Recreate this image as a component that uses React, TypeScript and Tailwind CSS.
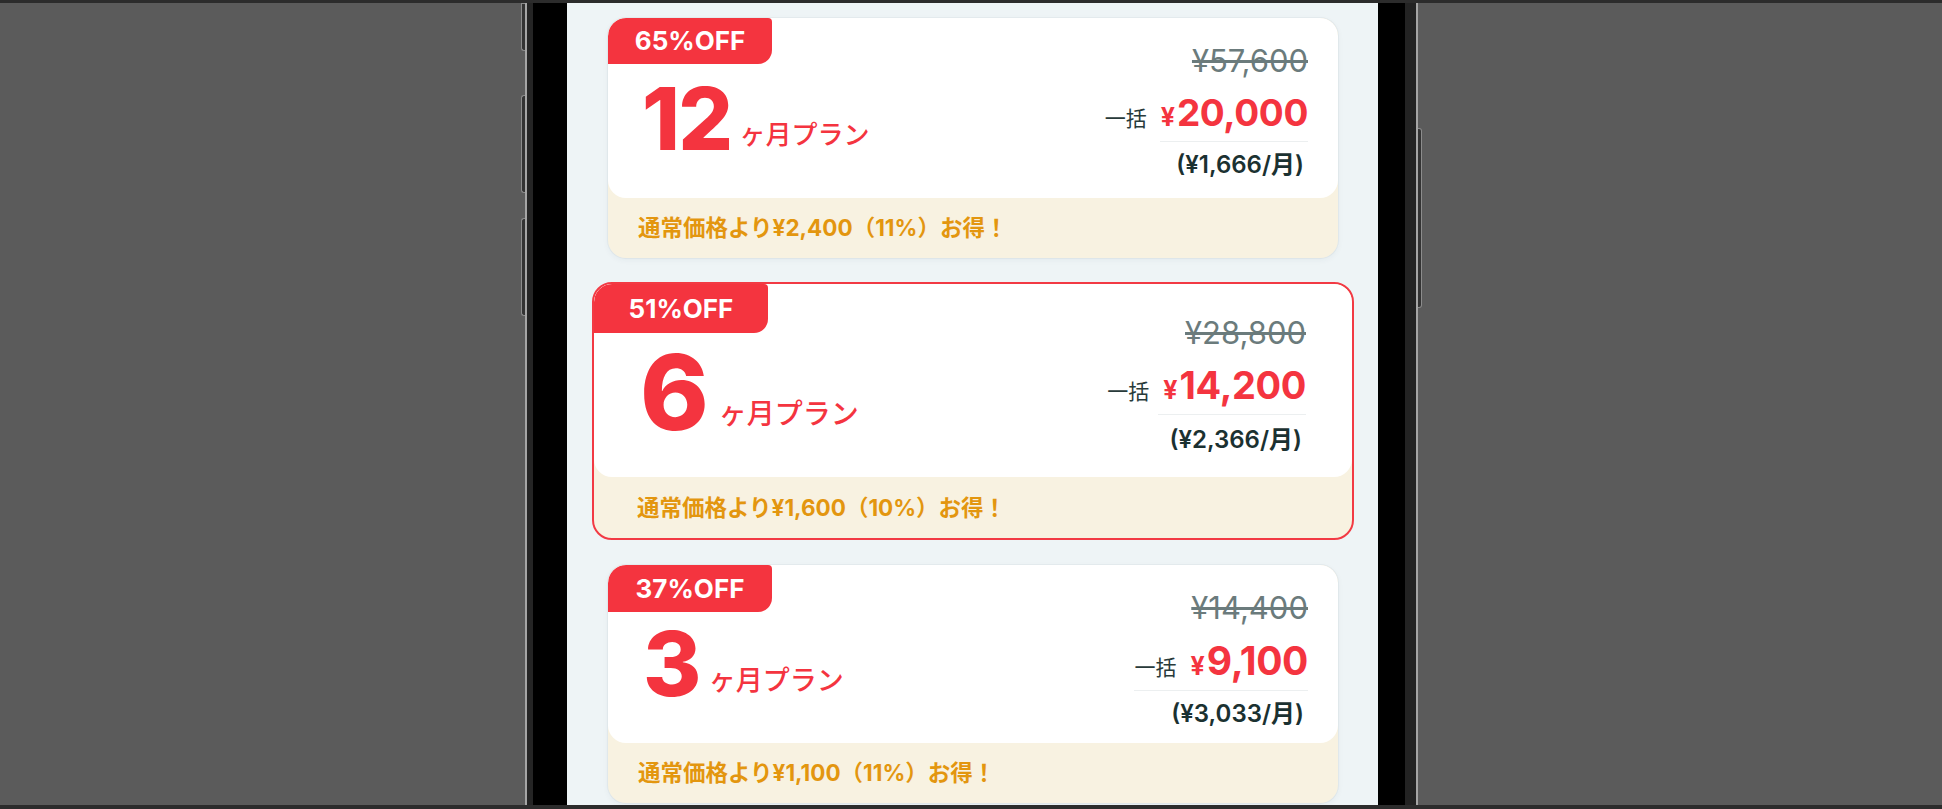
import type { ReactNode } from 'react';

interface Plan {
  badge: string;
  months: string;
  original: string;
  price: string;
  monthly: string;
  saving: string;
  selected?: boolean;
  /** クラスの差分(カードごとの寸法) */
  v: {
    panel: string;
    badge: string;
    numRow: string;
    num: string;
    unit: string;
    right: string;
    price: string;
    divider: string;
    monthly: string;
    foot: string;
  };
}

const plans: Plan[] = [
  {
    badge: '65%OFF',
    months: '12',
    original: '¥57,600',
    price: '20,000',
    monthly: '(¥1,666/月)',
    saving: '通常価格より¥2,400（11%）お得！',
    v: {
      panel: 'h-[180px]',
      badge: 'h-[46px] w-[164px]',
      numRow: 'mt-[12px] pl-[34px]',
      num: 'text-[86px]',
      unit: 'ml-[8px] text-[26px]',
      right: 'pt-[27px] pr-[30px]',
      price: 'text-[37px]',
      divider: 'w-[148px]',
      monthly: 'mt-[11px]',
      foot: 'h-[60px] pl-[30px]',
    },
  },
  {
    badge: '51%OFF',
    months: '6',
    original: '¥28,800',
    price: '14,200',
    monthly: '(¥2,366/月)',
    saving: '通常価格より¥1,600（10%）お得！',
    selected: true,
    v: {
      panel: 'h-[193px]',
      badge: 'h-[49px] w-[174px]',
      numRow: 'mt-[7px] pl-[46px]',
      num: 'text-[104px]',
      unit: 'ml-[12px] text-[28px]',
      right: 'pt-[33px] pr-[46px]',
      price: 'text-[38px]',
      divider: 'w-[148px]',
      monthly: 'mt-[13px]',
      foot: 'h-[61px] pl-[43px]',
    },
  },
  {
    badge: '37%OFF',
    months: '3',
    original: '¥14,400',
    price: '9,100',
    monthly: '(¥3,033/月)',
    saving: '通常価格より¥1,100（11%）お得！',
    v: {
      panel: 'h-[178px]',
      badge: 'h-[47px] w-[164px]',
      numRow: 'mt-[7px] pl-[35px]',
      num: 'text-[89px]',
      unit: 'ml-[9px] text-[27px]',
      right: 'pt-[27px] pr-[30px]',
      price: 'text-[39px]',
      divider: 'w-[174px]',
      monthly: 'mt-[11px]',
      foot: 'h-[60px] pl-[30px]',
    },
  },
];

function PlanCard({ plan, className }: { plan: Plan; className?: string }) {
  const { v } = plan;
  const frame = plan.selected
    ? 'mx-[-16px] rounded-[20px] border-2 border-[#f23a44]'
    : 'rounded-[18px] shadow-[0_0_0_1px_rgba(20,60,70,0.04),0_2px_6px_rgba(20,60,70,0.05)]';
  return (
    <div className={`overflow-hidden bg-[#f8f2e1] ${frame} ${className ?? ''}`}>
      <div className={`flex justify-between rounded-[18px] bg-white ${v.panel}`}>
        <div className="flex flex-col">
          <div
            className={`flex items-center justify-center rounded-tl-[18px] rounded-tr-[4px] rounded-br-[14px] bg-[#f4343f] text-[26px] leading-none font-bold text-white ${v.badge}`}
          >
            {plan.badge}
          </div>
          <div className={`flex items-baseline leading-none text-[#f4343f] ${v.numRow}`}>
            <span className={`font-extrabold tracking-[-0.02em] ${v.num}`}>{plan.months}</span>
            {/* 単位は数字のベースラインより少し上に載る */}
            <span className={`-translate-y-[6px] font-medium ${v.unit}`}>ヶ月プラン</span>
          </div>
        </div>

        <div className={`flex flex-col items-end ${v.right}`}>
          <span className="text-[31px] leading-none text-[#6b7b7c] line-through decoration-[#6b7b7c]">
            {plan.original}
          </span>
          <div className="mt-[18px] flex items-baseline gap-[14px] leading-none">
            <span className="text-[21px] text-[#283a3a]">一括</span>
            <span className="font-bold text-[#f4343f]">
              <span className="text-[25px]">¥</span>
              <span className={`ml-[2px] tracking-[-0.01em] ${v.price}`}>{plan.price}</span>
            </span>
          </div>
          <div className={`mt-[10px] h-px bg-[#eceff0] ${v.divider}`} />
          <span className={`mr-[4px] text-[24px] leading-none font-semibold text-[#1b3131] ${v.monthly}`}>
            {plan.monthly}
          </span>
        </div>
      </div>

      <div className={`flex items-center text-[22.5px] font-bold text-[#e3960f] ${v.foot}`}>{plan.saving}</div>
    </div>
  );
}

function SideButton({ className }: { className: string }) {
  return <span aria-hidden="true" className={`absolute w-[4px] border border-[#8c8c8c] bg-[#333] ${className}`} />;
}

function Bezel({ children }: { children?: ReactNode }) {
  return <>{children}</>;
}

export default function App() {
  return (
    <div className="flex h-[809px] w-full flex-col overflow-hidden bg-[#5b5b5b] font-['Inter','Noto_Sans_CJK_JP',sans-serif]">
      <div className="h-[3px] bg-[#2c2c2c]" />
      <div className="flex min-h-0 flex-1">
        {/* 左の背景 */}
        <div className="relative w-[525px] bg-[#5b5b5b]">
          <SideButton className="top-0 right-0 h-[48px] rounded-bl-[3px] border-r-0" />
          <SideButton className="top-[92px] right-0 h-[98px] rounded-l-[3px] border-r-0" />
          <SideButton className="top-[215px] right-0 h-[98px] rounded-l-[3px] border-r-0" />
        </div>
        <Bezel>
          <div className="w-[2px] bg-[#a5a5a5]" />
          <div className="w-[6px] bg-[#252525]" />
          <div className="w-[34px] bg-black" />
        </Bezel>

        {/* 画面 */}
        <div className="w-[811px] overflow-hidden bg-[#eef4f6] pt-[15px] pr-[40px] pl-[41px]">
          <div className="flex flex-col">
            <PlanCard plan={plans[0]} />
            <PlanCard plan={plans[1]} className="mt-[24px]" />
            <PlanCard plan={plans[2]} className="mt-[25px]" />
          </div>
        </div>

        <Bezel>
          <div className="w-[27px] bg-black" />
          <div className="w-[11px] bg-[#232323]" />
          <div className="w-[2px] bg-[#a5a5a5]" />
        </Bezel>
        <div className="relative flex-1 bg-[#5b5b5b]">
          <SideButton className="top-[125px] left-0 h-[180px] rounded-r-[3px] border-l-0" />
        </div>
      </div>
      <div className="h-[4px] bg-[#2c2c2c]" />
    </div>
  );
}
